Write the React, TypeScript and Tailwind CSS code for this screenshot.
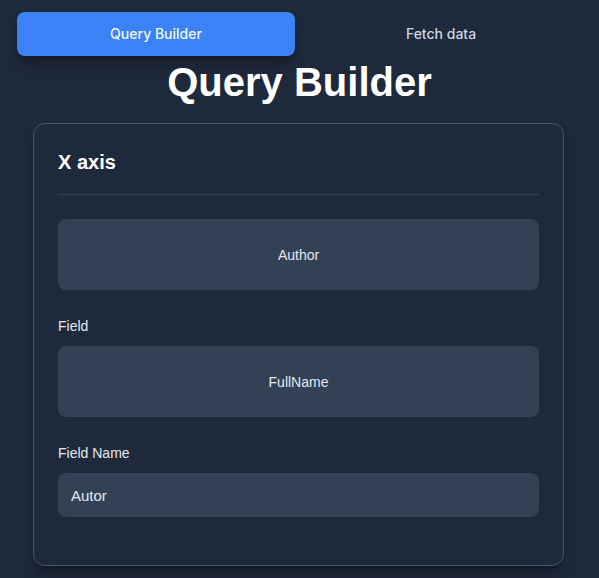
import { useState } from "react";

const arial = "font-['Liberation_Sans',Arial,sans-serif]";
const boxClass =
  "flex h-[71px] w-full items-center justify-center rounded-lg bg-[#334155] text-sm text-[#e2e8f0]";
const labelClass = "mt-6 mb-2 text-sm leading-6 text-[#e2e8f0]";

export default function App() {
  const [tab, setTab] = useState<"query" | "fetch">("query");
  const [fieldName, setFieldName] = useState("Autor");

  return (
    <div className={`min-h-[578px] bg-[#1e293b] pb-3 ${arial}`}>
      <div className="ml-[17px] grid w-[563px] grid-cols-2 gap-[7px] pt-3 font-['Inter',sans-serif]">
        <button
          type="button"
          onClick={() => setTab("query")}
          className={
            tab === "query"
              ? "h-[44px] rounded-lg bg-[#3b82f6] text-sm font-medium text-[#eff6ff] shadow-lg shadow-black/30"
              : "h-[44px] rounded-lg text-sm font-medium text-[#cbd5e1]"
          }
        >
          Query Builder
        </button>
        <button
          type="button"
          onClick={() => setTab("fetch")}
          className={
            tab === "fetch"
              ? "h-[44px] rounded-lg bg-[#3b82f6] text-sm font-medium text-[#eff6ff] shadow-lg shadow-black/30"
              : "h-[44px] rounded-lg text-sm font-medium text-[#cbd5e1]"
          }
        >
          Fetch data
        </button>
      </div>

      <h1 className="mt-[2px] mb-[17px] text-center text-[40px] leading-[48px] font-bold text-white">
        Query Builder
      </h1>

      <div className="ml-[33px] w-[531px] rounded-xl border border-[#475569] bg-[#1e293b] px-6 pt-6 pb-12 shadow-lg shadow-black/30">
        <div className="border-b border-[#334155] pb-[18px]">
          <h2 className="text-xl leading-7 font-bold text-white">X axis</h2>
        </div>

        <div className={`mt-6 ${boxClass}`}>Author</div>

        <p className={labelClass}>Field</p>
        <div className={boxClass}>FullName</div>

        <p className={labelClass}>Field Name</p>
        <input
          value={fieldName}
          onChange={(e) => setFieldName(e.target.value)}
          className="h-[44px] w-full rounded-lg bg-[#334155] px-[13px] text-[15px] text-[#e2e8f0] outline-none"
        />
      </div>
    </div>
  );
}
